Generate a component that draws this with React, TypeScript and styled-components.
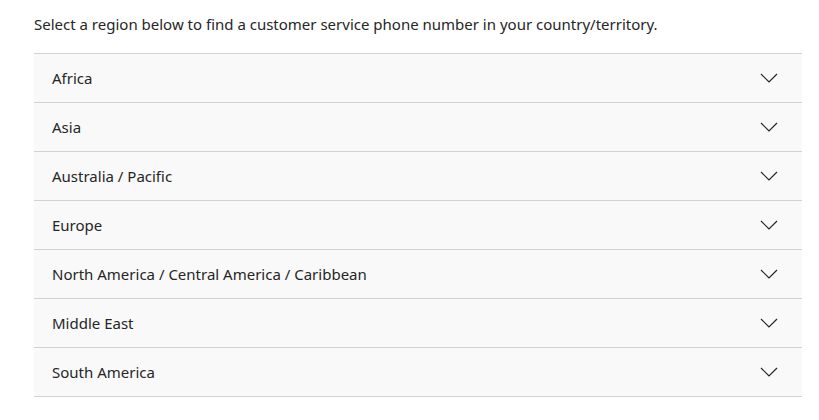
import React from 'react';
import styled, { createGlobalStyle } from 'styled-components';

const GlobalStyle = createGlobalStyle`
  html, body {
    margin: 0;
    padding: 0;
    background: #ffffff;
  }
  body {
    font-family: "Noto Sans", "Open Sans", Arial, sans-serif;
    color: #262626;
  }
`;

const Page = styled.div`
  width: 768px;
  padding: 14px 17px 0 34px;
`;

const Intro = styled.p`
  margin: 0 0 18px;
  font-size: 15px;
  line-height: 21px;
  color: #262626;
`;

const List = styled.div`
  display: flex;
  flex-direction: column;
  border-top: 1px solid #d2d2d2;
`;

const Row = styled.button`
  display: flex;
  align-items: center;
  justify-content: space-between;
  height: 49px;
  padding: 0 24px 0 18px;
  border: none;
  border-bottom: 1px solid #d2d2d2;
  background: #f9f9f9;
  font: inherit;
  font-size: 15px;
  color: #262626;
  text-align: left;
  cursor: pointer;
`;

const Chevron = () => (
  <svg width="18" height="10" viewBox="0 0 18 10" fill="none">
    <path d="M1 1l8 8 8-8" stroke="#262626" strokeWidth="1.2" />
  </svg>
);

const regions = [
  'Africa',
  'Asia',
  'Australia / Pacific',
  'Europe',
  'North America / Central America / Caribbean',
  'Middle East',
  'South America',
];

const App = () => (
  <>
    <GlobalStyle />
    <Page>
      <Intro>
        Select a region below to find a customer service phone number in your
        country/territory.
      </Intro>
      <List>
        {regions.map((region) => (
          <Row key={region}>
            <span>{region}</span>
            <Chevron />
          </Row>
        ))}
      </List>
    </Page>
  </>
);

export default App;
